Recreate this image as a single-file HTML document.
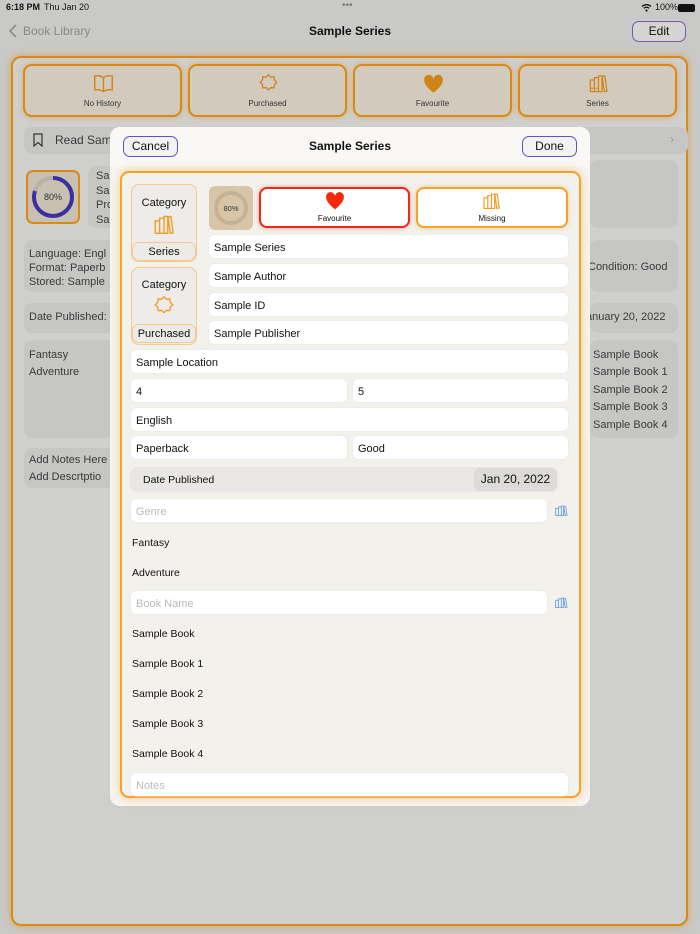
<!DOCTYPE html>
<html><head><meta charset="utf-8"><style>
*{box-sizing:border-box;margin:0;padding:0}
body{width:700px;height:934px;position:relative;overflow:hidden;background:#c9c9c7;font-family:"Liberation Sans",sans-serif;color:#111}
.a{position:absolute}
.t{position:absolute;white-space:nowrap}
.dim{color:#3a3a3a}
.tile{position:absolute;border:2px solid #d88a14;border-radius:9px;background:#d2cbbd;box-shadow:0 0 6px rgba(230,150,30,.6)}
.tile span{position:absolute;width:100%;text-align:center;top:33px;font-size:8px;color:#333}
.gbox{position:absolute;background:#c6c6c4;border-radius:8px}
.fld{position:absolute;background:#fff;border-radius:5px;height:23px;font-size:11px;padding-left:5px;padding-top:1px;line-height:25px;box-shadow:0 0 0 .5px #e6e6e6}
.ph{color:#bbb}
.li{position:absolute;left:132px;font-size:10.5px}
</style></head><body>
<div class="t" style="left:6px;top:2px;font-size:9px;font-weight:bold">6:18 PM</div>
<div class="t" style="left:44px;top:2px;font-size:9px">Thu Jan 20</div>
<div class="t" style="left:342px;top:0px;font-size:10px;color:#777">•••</div>
<div class="t" style="left:655px;top:2px;font-size:9px">100%</div>
<div class="a" style="left:678px;top:4px;width:17px;height:8px;background:#111;border-radius:2px"></div>
<svg class="a" style="left:641px;top:3px" width="11" height="9" viewBox="0 0 11 9"><path d="M1 3.5a6.5 6.5 0 0 1 9 0M2.8 5.3a4 4 0 0 1 5.4 0" stroke="#111" stroke-width="1.3" fill="none"/><circle cx="5.5" cy="7.5" r="1.1" fill="#111"/></svg>
<svg class="a" style="left:9px;top:24px" width="8" height="14" viewBox="0 0 8 14"><path d="M7 1L1 7l6 6" stroke="#8a8a8a" stroke-width="1.6" fill="none"/></svg>
<div class="t" style="left:23px;top:24px;font-size:12px;color:#888">Book Library</div>
<div class="t" style="left:0;width:700px;text-align:center;top:24px;font-size:12px;font-weight:bold">Sample Series</div>
<div class="a" style="left:632px;top:21px;width:54px;height:21px;border:1.2px solid #7b58a8;border-radius:7px;background:#d4d4d2;font-size:12px;text-align:center;line-height:19px">Edit</div>
<div class="a" style="left:11px;top:56px;width:677px;height:870px;border:2px solid #d88a14;border-radius:10px;background:#cfcfcd;box-shadow:0 0 8px rgba(220,140,20,.6)"></div>
<div class="tile" style="left:23px;top:64px;width:159px;height:53px"><svg class="a" style="left:68px;top:7px" width="21" height="21" viewBox="0 0 18 18"><path d="M9 4C7 2.5 4 2 1.5 2.5v12C4 14 7 14.5 9 16c2-1.5 5-2 7.5-1.5v-12C14 2 11 2.5 9 4zM9 4v12" stroke="#d08418" stroke-width="1.2" fill="none"/></svg><span>No History</span></div>
<div class="tile" style="left:188px;top:64px;width:159px;height:53px"><svg class="a" style="left:68px;top:7px" width="21" height="21" viewBox="0 0 18 18"><path d="M9 1.5l2 2 2.8-.3.3 2.8 2 2-2 2-.3 2.8-2.8-.3-2 2-2-2-2.8.3-.3-2.8-2-2 2-2 .3-2.8 2.8.3z" stroke="#d08418" stroke-width="1.1" fill="none"/></svg><span>Purchased</span></div>
<div class="tile" style="left:353px;top:64px;width:159px;height:53px"><svg class="a" style="left:68px;top:7px" width="21" height="21" viewBox="0 0 18 18"><path d="M9 17C4 13 1 9.5 1 6a4 4 0 0 1 8-1 4 4 0 0 1 8 1c0 3.5-3 7-8 11z" fill="#d08418"/></svg><span>Favourite</span></div>
<div class="tile" style="left:518px;top:64px;width:159px;height:53px"><svg class="a" style="left:69px;top:7px" width="19" height="21" viewBox="0 0 16 18"><path d="M1 6h3.5v10H1zM4.5 4H8v12H4.5zM8 2.5h3V16H8zM11.2 3l2.3-.4 1.8 13-2.3.4z" stroke="#d08418" stroke-width="1.1" fill="none"/><path d="M1 13h3.5M4.5 13H8" stroke="#d08418" stroke-width=".8"/></svg><span>Series</span></div>
<div class="gbox" style="left:24px;top:127px;width:664px;height:27px"></div>
<svg class="a" style="left:33px;top:133px" width="10" height="14" viewBox="0 0 10 14"><path d="M1 1h8v12L5 9.5 1 13z" stroke="#333" stroke-width="1.2" fill="none"/></svg>
<div class="t dim" style="left:55px;top:133px;font-size:12px">Read Samp</div>
<div class="t" style="left:670px;top:132px;font-size:12px;color:#999">›</div>
<div class="a" style="left:26px;top:170px;width:54px;height:54px;border:2px solid #d88a14;border-radius:7px;background:#c8c0b0"></div>
<svg class="a" style="left:29px;top:173px" width="48" height="48" viewBox="0 0 48 48"><circle cx="24" cy="24" r="19" stroke="#b9b0a8" stroke-width="4" fill="none"/><circle cx="24" cy="24" r="19" stroke="#3a2fa0" stroke-width="4" fill="none" stroke-dasharray="95.5 120" transform="rotate(-90 24 24)"/><text x="24" y="27" text-anchor="middle" font-size="9" fill="#333" font-family="Liberation Sans">80%</text></svg>
<div class="gbox" style="left:88px;top:166px;width:30px;height:62px"></div>
<div class="t dim" style="left:96px;top:169px;font-size:11px;line-height:14.5px">Sa<br>Sa<br>Pro<br>Sa</div>
<div class="gbox" style="left:24px;top:240px;width:90px;height:52px"></div>
<div class="t dim" style="left:29px;top:247px;font-size:11px;line-height:14px">Language: Engl<br>Format: Paperb<br>Stored: Sample</div>
<div class="gbox" style="left:24px;top:303px;width:90px;height:30px"></div>
<div class="t dim" style="left:29px;top:311px;font-size:11px">Date Published:</div>
<div class="gbox" style="left:24px;top:340px;width:90px;height:98px"></div>
<div class="t dim" style="left:29px;top:347px;font-size:11px;line-height:17px">Fantasy<br>Adventure</div>
<div class="gbox" style="left:24px;top:448px;width:90px;height:40px"></div>
<div class="t dim" style="left:29px;top:452px;font-size:11px;line-height:17px">Add Notes Here<br>Add Descrtptio</div>
<div class="gbox" style="left:590px;top:160px;width:88px;height:68px"></div>
<div class="gbox" style="left:590px;top:240px;width:88px;height:52px"></div>
<div class="t dim" style="left:588px;top:261px;font-size:11px">Condition: Good</div>
<div class="gbox" style="left:590px;top:303px;width:88px;height:30px"></div>
<div class="t dim" style="left:586px;top:311px;font-size:11px">anuary 20, 2022</div>
<div class="gbox" style="left:590px;top:340px;width:88px;height:98px"></div>
<div class="t dim" style="left:593px;top:347px;font-size:11px;line-height:17.4px">Sample Book<br>Sample Book 1<br>Sample Book 2<br>Sample Book 3<br>Sample Book 4</div>
<div class="a" style="left:110px;top:127px;width:480px;height:679px;background:#f6f5f2;border-radius:10px"></div>
<div class="a" style="left:110px;top:127px;width:480px;height:40px;background:#f9f8f6;border-radius:10px 10px 0 0"></div>
<div class="a" style="left:123px;top:136px;width:55px;height:21px;border:1.2px solid #5b56b8;border-radius:7px;background:#f3f3f3;font-size:12px;text-align:center;line-height:19px">Cancel</div>
<div class="t" style="left:110px;width:480px;text-align:center;top:139px;font-size:12px;font-weight:bold">Sample Series</div>
<div class="a" style="left:522px;top:136px;width:55px;height:21px;border:1.2px solid #5b56b8;border-radius:7px;background:#f3f3f3;font-size:12px;text-align:center;line-height:19px">Done</div>
<div class="a" style="left:120px;top:171px;width:461px;height:627px;border:2px solid #f5a22a;border-radius:9px;background:#f3f1ec;box-shadow:0 0 10px rgba(250,170,50,.55)"></div>
<div class="a" style="left:131px;top:184px;width:66px;height:78px;border:1.3px solid #f6c98a;border-radius:8px;background:#eeecea"></div>
<div class="t" style="left:131px;width:66px;text-align:center;top:197px;font-size:11px">Category</div>
<svg class="a" style="left:154px;top:213px" width="20" height="23" viewBox="0 0 16 18"><path d="M1 6h3.5v10H1zM4.5 4H8v12H4.5zM8 2.5h3V16H8zM11.2 3l2.3-.4 1.8 13-2.3.4z" stroke="#f59b1f" stroke-width="1.1" fill="none"/></svg>
<div class="a" style="left:132px;top:242px;width:64px;height:19px;border:1.3px solid #f6c98a;border-radius:7px;background:#ecebe9;font-size:11px;text-align:center;line-height:19px">Series</div>
<div class="a" style="left:131px;top:267px;width:66px;height:78px;border:1.3px solid #f6c98a;border-radius:8px;background:#eeecea"></div>
<div class="t" style="left:131px;width:66px;text-align:center;top:279px;font-size:11px">Category</div>
<svg class="a" style="left:153px;top:295px" width="22" height="22" viewBox="0 0 18 18"><path d="M9 1.5l2 2 2.8-.3.3 2.8 2 2-2 2-.3 2.8-2.8-.3-2 2-2-2-2.8.3-.3-2.8-2-2 2-2 .3-2.8 2.8.3z" stroke="#f59b1f" stroke-width="1.1" fill="none"/></svg>
<div class="a" style="left:132px;top:324px;width:64px;height:19px;border:1.3px solid #f6c98a;border-radius:7px;background:#ecebe9;font-size:11px;text-align:center;line-height:19px">Purchased</div>
<div class="a" style="left:209px;top:186px;width:44px;height:44px;border-radius:6px;background:#d7c5a8"></div>
<svg class="a" style="left:211px;top:188px" width="40" height="40" viewBox="0 0 40 40"><circle cx="20" cy="20" r="15" stroke="#c5b295" stroke-width="4" fill="none"/><text x="20" y="23" text-anchor="middle" font-size="7.5" fill="#333" font-family="Liberation Sans">80%</text></svg>
<div class="a" style="left:259px;top:187px;width:151px;height:41px;border:2px solid #f0261a;border-radius:8px;background:#fff;box-shadow:0 0 4px rgba(240,40,20,.4)"></div>
<svg class="a" style="left:325px;top:191px" width="20" height="19" viewBox="0 0 18 17"><path d="M9 16.5C4 12.5 1 9 1 5.5a4 4 0 0 1 8-1 4 4 0 0 1 8 1c0 3.5-3 7-8 11z" fill="#f52a0c"/></svg>
<div class="t" style="left:259px;width:151px;text-align:center;top:214px;font-size:8px">Favourite</div>
<div class="a" style="left:416px;top:187px;width:152px;height:41px;border:2px solid #f5a22a;border-radius:8px;background:#fff;box-shadow:0 0 4px rgba(245,160,40,.5)"></div>
<svg class="a" style="left:483px;top:191px" width="17" height="20" viewBox="0 0 16 18"><path d="M1 6h3.5v10H1zM4.5 4H8v12H4.5zM8 2.5h3V16H8zM11.2 3l2.3-.4 1.8 13-2.3.4z" stroke="#f59b1f" stroke-width="1.1" fill="none"/></svg>
<div class="t" style="left:416px;width:152px;text-align:center;top:214px;font-size:8px">Missing</div>
<div class="fld" style="left:209px;top:235px;width:359px;height:23px">Sample Series</div>
<div class="fld" style="left:209px;top:264px;width:359px">Sample Author</div>
<div class="fld" style="left:209px;top:293px;width:359px">Sample ID</div>
<div class="fld" style="left:209px;top:321px;width:359px">Sample Publisher</div>
<div class="fld" style="left:131px;top:350px;width:437px">Sample Location</div>
<div class="fld" style="left:131px;top:379px;width:216px">4</div>
<div class="fld" style="left:353px;top:379px;width:215px">5</div>
<div class="fld" style="left:131px;top:408px;width:437px">English</div>
<div class="fld" style="left:131px;top:436px;width:216px">Paperback</div>
<div class="fld" style="left:353px;top:436px;width:215px">Good</div>
<div class="a" style="left:130px;top:467px;width:428px;height:25px;background:#e8e7e5;border-radius:7px"></div>
<div class="t" style="left:143px;top:474px;font-size:10.5px">Date Published</div>
<div class="a" style="left:474px;top:468px;width:83px;height:23px;background:#dcdbd9;border-radius:6px;font-size:12px;text-align:center;line-height:23px">Jan 20, 2022</div>
<div class="fld ph" style="left:131px;top:499px;width:416px">Genre</div>
<svg class="a" style="left:554px;top:504px" width="14" height="13" viewBox="0 0 18 18"><path d="M1.5 6h4v10h-4zM5.5 4h4v12h-4zM9.5 3h3v13h-3zM12.8 3.5l2.5-.5 2 12.5-2.5.5z" stroke="#7aa6e8" stroke-width="1.4" fill="none"/></svg>
<div class="li" style="top:537px">Fantasy</div>
<div class="li" style="top:567px">Adventure</div>
<div class="fld ph" style="left:131px;top:591px;width:416px">Book Name</div>
<svg class="a" style="left:554px;top:596px" width="14" height="13" viewBox="0 0 18 18"><path d="M1.5 6h4v10h-4zM5.5 4h4v12h-4zM9.5 3h3v13h-3zM12.8 3.5l2.5-.5 2 12.5-2.5.5z" stroke="#7aa6e8" stroke-width="1.4" fill="none"/></svg>
<div class="li" style="top:628px">Sample Book</div>
<div class="li" style="top:658px">Sample Book 1</div>
<div class="li" style="top:688px">Sample Book 2</div>
<div class="li" style="top:718px">Sample Book 3</div>
<div class="li" style="top:748px">Sample Book 4</div>
<div class="fld ph" style="left:131px;top:773px;width:437px">Notes</div>
</body></html>
